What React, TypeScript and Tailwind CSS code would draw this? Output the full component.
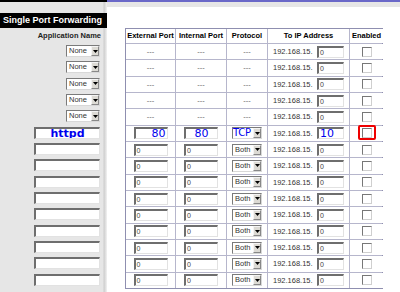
import React from "react";

const font = "font-['Liberation_Sans',Arial,sans-serif]";

const Arrow = () => (
  <svg width="5" height="3" viewBox="0 0 5 3">
    <path d="M0 0h5L2.5 3z" fill="#000" />
  </svg>
);

const Select = ({ value, width, blue }: { value: string; width: string; blue?: boolean }) => (
  <div
    className={`flex h-[12px] ${width} border border-t-[#7a7a7a] border-l-[#7a7a7a] border-b-[#d8d8d8] border-r-[#d8d8d8] bg-white`}
  >
    <span
      className={
        blue
          ? "flex-1 overflow-visible whitespace-nowrap text-[10px] leading-[10px] tracking-[-0.3px] text-[#0000ee] font-['DejaVu_Sans',sans-serif]"
          : "flex-1 overflow-hidden pl-[2px] text-[7.5px] leading-[10px] text-[#333]"
      }
    >
      {value}
    </span>
    <span className="flex w-[8px] items-center justify-center border border-t-[#f4f4f4] border-l-[#f4f4f4] border-b-[#888] border-r-[#888] bg-[#dcdad4]">
      <Arrow />
    </span>
  </div>
);

const Field = ({
  value,
  width,
  blue,
  bold,
  align = "text-left",
}: {
  value: string;
  width: string;
  blue?: boolean;
  bold?: boolean;
  align?: string;
}) => (
  <div
    className={`h-[12px] ${width} ${align} overflow-hidden border-t-2 border-l-2 border-b border-r border-t-[#6e6e6e] border-l-[#6e6e6e] border-b-[#e2e2e2] border-r-[#e2e2e2] bg-white px-[1px] ${
      blue
        ? "text-[11px] leading-[10px] text-[#0000ee] font-['DejaVu_Sans',sans-serif]"
        : "text-[7px] leading-[9px] text-[#444]"
    } ${bold ? "font-bold text-[10px]" : ""}`}
  >
    {value}
  </div>
);

const Check = () => (
  <div className="h-[10px] w-[10px] border border-t-[#777] border-l-[#777] border-b-[#cfcfcf] border-r-[#cfcfcf] bg-white" />
);

type Row = { kind: "empty" } | { kind: "filled" } | { kind: "blank" };

const rows: Row[] = [
  ...Array.from({ length: 5 }, () => ({ kind: "empty" as const })),
  { kind: "filled" },
  ...Array.from({ length: 9 }, () => ({ kind: "blank" as const })),
];

const cell = "flex items-center justify-center bg-white";

const App = () => {
  return (
    <div className={`flex h-[292px] w-[400px] flex-col overflow-hidden bg-[#e6e6e6] ${font}`}>
      <div className="flex h-[2px] shrink-0">
        <div className="w-[107px] bg-black" />
        <div className="flex-1 bg-[#6a68c8]" />
      </div>
      <div className="flex flex-1">
        {/* left panel */}
        <div className="flex w-[107px] flex-col bg-[linear-gradient(to_right,#e6e6e6_103px,#cdcdcd_104px,#f2f2f2_107px)] pt-[11px]">
          <div className="flex h-[15px] items-center bg-black pl-[3px] text-[9px] font-bold text-white">
            Single Port Forwarding
          </div>
          <div className="flex h-[15px] items-center justify-end pr-[6px] text-[7.5px] font-bold text-[#222]">
            Application Name
          </div>
          {rows.map((r, i) => (
            <div key={i} className="flex h-[16.33px] items-center justify-end pr-[7px]">
              {r.kind === "empty" && <Select value="None" width="w-[34px]" />}
              {r.kind === "filled" && (
                <Field value="httpd" width="w-[66px]" blue bold align="text-center" />
              )}
              {r.kind === "blank" && <Field value="" width="w-[66px]" />}
            </div>
          ))}
        </div>

        {/* content */}
        <div className="mt-[5px] flex-1 bg-white pl-[18px] pt-[21px]">
          <div className="grid w-[258px] grid-cols-[49px_50px_40px_81px_33px] grid-rows-[14px] auto-rows-[15.33px] gap-px border border-[#8f8fb0] bg-[#b6b6cc] text-[7.5px] text-[#333]">
            <div className={`${cell} font-bold text-black`}>External Port</div>
            <div className={`${cell} font-bold text-black`}>Internal Port</div>
            <div className={`${cell} font-bold text-black`}>Protocol</div>
            <div className={`${cell} font-bold text-black`}>To IP Address</div>
            <div className={`${cell} font-bold text-black`}>Enabled</div>
            {rows.map((r, i) => (
              <React.Fragment key={i}>
                <div className={`${cell} text-[#666]`}>
                  {r.kind === "empty" ? (
                    "---"
                  ) : (
                    <Field
                      value={r.kind === "filled" ? "80" : "0"}
                      width="w-[34px]"
                      blue={r.kind === "filled"}
                      align={r.kind === "filled" ? "text-right" : "text-left"}
                    />
                  )}
                </div>
                <div className={`${cell} text-[#666]`}>
                  {r.kind === "empty" ? (
                    "---"
                  ) : (
                    <Field
                      value={r.kind === "filled" ? "80" : "0"}
                      width="w-[34px]"
                      blue={r.kind === "filled"}
                      align={r.kind === "filled" ? "text-center" : "text-left"}
                    />
                  )}
                </div>
                <div className={`${cell} text-[#666]`}>
                  {r.kind === "empty" ? (
                    "---"
                  ) : r.kind === "filled" ? (
                    <Select value="TCP" width="w-[30px]" blue />
                  ) : (
                    <Select value="Both" width="w-[30px]" />
                  )}
                </div>
                <div className="flex items-center bg-white pl-[5px]">
                  <span className="w-[44px]">192.168.15.</span>
                  <Field
                    value={r.kind === "filled" ? "10" : "0"}
                    width="w-[27px]"
                    blue={r.kind === "filled"}
                  />
                </div>
                <div className={cell}>
                  <div className="relative">
                    <Check />
                    {r.kind === "filled" && (
                      <span className="absolute -left-[4px] -top-[3px] h-[15px] w-[18px] rounded-[2px] border-2 border-[#ee0000]" />
                    )}
                  </div>
                </div>
              </React.Fragment>
            ))}
          </div>
        </div>
      </div>
    </div>
  );
};

export default App;
